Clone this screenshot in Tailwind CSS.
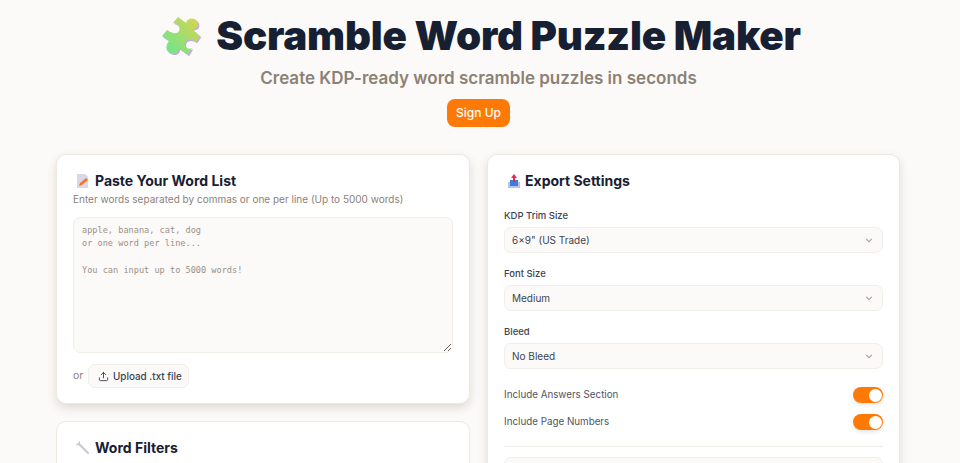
<!DOCTYPE html>
<html lang="en">
<head>
    <meta charset="UTF-8">
    <meta name="viewport" content="width=device-width, initial-scale=1.0">
    <title>Scramble Word Puzzle Maker</title>
    <script src="https://cdn.jsdelivr.net/npm/@tailwindcss/browser@4"></script>
</head>
<body class="bg-[#fcfaf8] font-['Inter',sans-serif] h-[463px] overflow-hidden">
    <!-- Header -->
    <header class="flex flex-col items-center pt-[10px] pr-[3px]">
        <div class="flex items-center h-[52px] ml-[5px]">
            <svg class="w-[42px] h-[42px] mr-[13px]" viewBox="0 0 42 42">
                <defs>
                    <linearGradient id="puzzle" x1="0" y1="1" x2="1" y2="0">
                        <stop offset="0.1" stop-color="#6fe58c"/>
                        <stop offset="0.9" stop-color="#d0d653"/>
                    </linearGradient>
                </defs>
                <path transform="translate(1.2 1.2)" fill="#c9a4ee" d="M17 2 L25 8 C26 3 33 2 36 6 C39 10 36 15 31 14 L39 21 L35 27 C31 24 25 24 24 28 C23 32 27 35 31 33 L27 40 L18 33.5 C18 38 13 40 9 38 C5 36 4 31 8 26 L1 21 L6 15 C10 18 16 20 18 16 C20 12 16 8 12 8 Z"/>
                <path fill="url(#puzzle)" d="M17 2 L25 8 C26 3 33 2 36 6 C39 10 36 15 31 14 L39 21 L35 27 C31 24 25 24 24 28 C23 32 27 35 31 33 L27 40 L18 33.5 C18 38 13 40 9 38 C5 36 4 31 8 26 L1 21 L6 15 C10 18 16 20 18 16 C20 12 16 8 12 8 Z"/>
            </svg>
            <h1 class="text-[40.3px] leading-[52px] font-black text-[#172033] tracking-[-0.2px]">Scramble Word Puzzle Maker</h1>
        </div>
        <p class="text-[17px] leading-[26px] font-semibold text-[#8c8176] mt-[3px]">Create KDP-ready word scramble puzzles in seconds</p>
        <button class="mt-[8px] h-[28px] w-[63px] rounded-[8px] bg-[#ff7a05] text-white text-[12px] font-medium">Sign Up</button>
    </header>

    <main class="grid grid-cols-[414px_413px] gap-x-[17px] items-start pl-[56px] mt-[27px]">
        <div class="flex flex-col gap-[17px]">
            <!-- Word list -->
            <section class="h-[250px] bg-white border border-[#ede8e2] rounded-[10px] shadow-[0_4px_10px_rgba(60,50,40,0.16)] px-[16px] pt-[16px]">
                <h2 class="flex items-center text-[14px] leading-[20px] font-bold text-[#172033]">
                    <svg class="w-[14px] h-[16px] ml-[3px] mr-[5px]" viewBox="0 0 14 16">
                        <path fill="#dcd6e6" d="M1 1h8l3 3v11H1z"/>
                        <path fill="#f4762a" d="M3 13l1-3 6-5 2 2-6 5z"/>
                    </svg>
                    Paste Your Word List
                </h2>
                <p class="text-[10px] leading-[16px] text-[#8c8176]">Enter words separated by commas or one per line (Up to 5000 words)</p>
                <textarea class="block w-[380px] h-[136px] mt-[10px] bg-[#fcfaf8] border border-[#f1eeea] rounded-[7px] px-[8px] py-[6px] font-['DejaVu_Sans_Mono',monospace] text-[8.6px] leading-[13.4px] placeholder:text-[#9a9187]" placeholder="apple, banana, cat, dog
or one word per line...

You can input up to 5000 words!"></textarea>
                <div class="flex items-center mt-[11px]">
                    <span class="text-[10.5px] text-[#8c8176] w-[15px]">or</span>
                    <button class="flex items-center h-[24px] w-[101px] pl-[9px] bg-[#fcfaf8] border border-[#f1eeea] rounded-[7px] text-[9.9px] font-medium text-[#3b4352]">
                        <svg class="w-[11px] h-[11px] mr-[4px]" viewBox="0 0 24 24" fill="none" stroke="#3b4352" stroke-width="2" stroke-linecap="round" stroke-linejoin="round">
                            <path d="M21 15v4a2 2 0 0 1-2 2H5a2 2 0 0 1-2-2v-4"/>
                            <path d="M17 8l-5-5-5 5"/>
                            <path d="M12 3v12"/>
                        </svg>
                        Upload .txt file
                    </button>
                </div>
            </section>

            <!-- Word filters -->
            <section class="h-[200px] bg-white border border-[#ede8e2] rounded-[10px] px-[16px] pt-[16px]">
                <h2 class="flex items-center text-[14px] leading-[20px] font-bold text-[#172033]">
                    <svg class="w-[14px] h-[14px] ml-[3px] mr-[5px]" viewBox="0 0 14 14" fill="none" stroke="#c9c4d6" stroke-width="2" stroke-linecap="round">
                        <path d="M3 3l9 9"/>
                        <path d="M1 3.5L3 3l.5-2" stroke-width="1.4"/>
                    </svg>
                    Word Filters
                </h2>
            </section>
        </div>

        <!-- Export settings -->
        <section class="h-[500px] bg-white border border-[#ede8e2] rounded-[10px] shadow-[0_4px_10px_rgba(60,50,40,0.16)] px-[16px] pt-[16px]">
            <h2 class="flex items-center text-[14px] leading-[20px] font-bold text-[#172033]">
                <svg class="w-[14px] h-[15px] ml-[3px] mr-[4px]" viewBox="0 0 14 15">
                    <path fill="#b9c2e6" d="M1 8h12v6H1z"/>
                    <path fill="#3b7fd6" d="M3 6h8v6H3z"/>
                    <path fill="#e8284f" d="M7 0l3 4H8v4H6V4H4z"/>
                </svg>
                Export Settings
            </h2>
            <div class="flex flex-col gap-[13px] mt-[17px]">
                <div>
                    <label class="block text-[9.5px] leading-[16px] font-medium text-[#3b4352] mb-[3px]">KDP Trim Size</label>
                    <div class="flex items-center justify-between h-[26px] bg-[#fcfaf8] border border-[#f1eeea] rounded-[7px] pl-[7px] pr-[8px] text-[10px] text-[#3b4352]">
                        <span>6×9" (US Trade)</span>
                        <svg class="w-[10px] h-[10px]" viewBox="0 0 24 24" fill="none" stroke="#a39a90" stroke-width="2.5"><path d="M5 9l7 7 7-7"/></svg>
                    </div>
                </div>
                <div>
                    <label class="block text-[9.5px] leading-[16px] font-medium text-[#3b4352] mb-[3px]">Font Size</label>
                    <div class="flex items-center justify-between h-[26px] bg-[#fcfaf8] border border-[#f1eeea] rounded-[7px] pl-[7px] pr-[8px] text-[10px] text-[#3b4352]">
                        <span>Medium</span>
                        <svg class="w-[10px] h-[10px]" viewBox="0 0 24 24" fill="none" stroke="#a39a90" stroke-width="2.5"><path d="M5 9l7 7 7-7"/></svg>
                    </div>
                </div>
                <div>
                    <label class="block text-[9.5px] leading-[16px] font-medium text-[#3b4352] mb-[3px]">Bleed</label>
                    <div class="flex items-center justify-between h-[26px] bg-[#fcfaf8] border border-[#f1eeea] rounded-[7px] pl-[7px] pr-[8px] text-[10px] text-[#3b4352]">
                        <span>No Bleed</span>
                        <svg class="w-[10px] h-[10px]" viewBox="0 0 24 24" fill="none" stroke="#a39a90" stroke-width="2.5"><path d="M5 9l7 7 7-7"/></svg>
                    </div>
                </div>
            </div>
            <div class="flex items-center justify-between h-[16px] mt-[18px] text-[9.8px] text-[#4e5562]">
                <span>Include Answers Section</span>
                <span class="flex justify-end items-center w-[30px] h-[16px] rounded-full bg-[#ff7a05] pr-[1.5px] shadow-[0_2px_4px_rgba(60,50,40,0.12)]"><span class="w-[13px] h-[13px] rounded-full bg-white"></span></span>
            </div>
            <div class="flex items-center justify-between h-[16px] mt-[11px] text-[9.8px] text-[#4e5562]">
                <span>Include Page Numbers</span>
                <span class="flex justify-end items-center w-[30px] h-[16px] rounded-full bg-[#ff7a05] pr-[1.5px] shadow-[0_2px_4px_rgba(60,50,40,0.12)]"><span class="w-[13px] h-[13px] rounded-full bg-white"></span></span>
            </div>
            <div class="h-px bg-[#f1eeea] mt-[16px]"></div>
            <div class="h-[60px] bg-[#fcfaf8] border border-[#f1eeea] rounded-[7px] mt-[10px]"></div>
        </section>
    </main>
</body>
</html>
